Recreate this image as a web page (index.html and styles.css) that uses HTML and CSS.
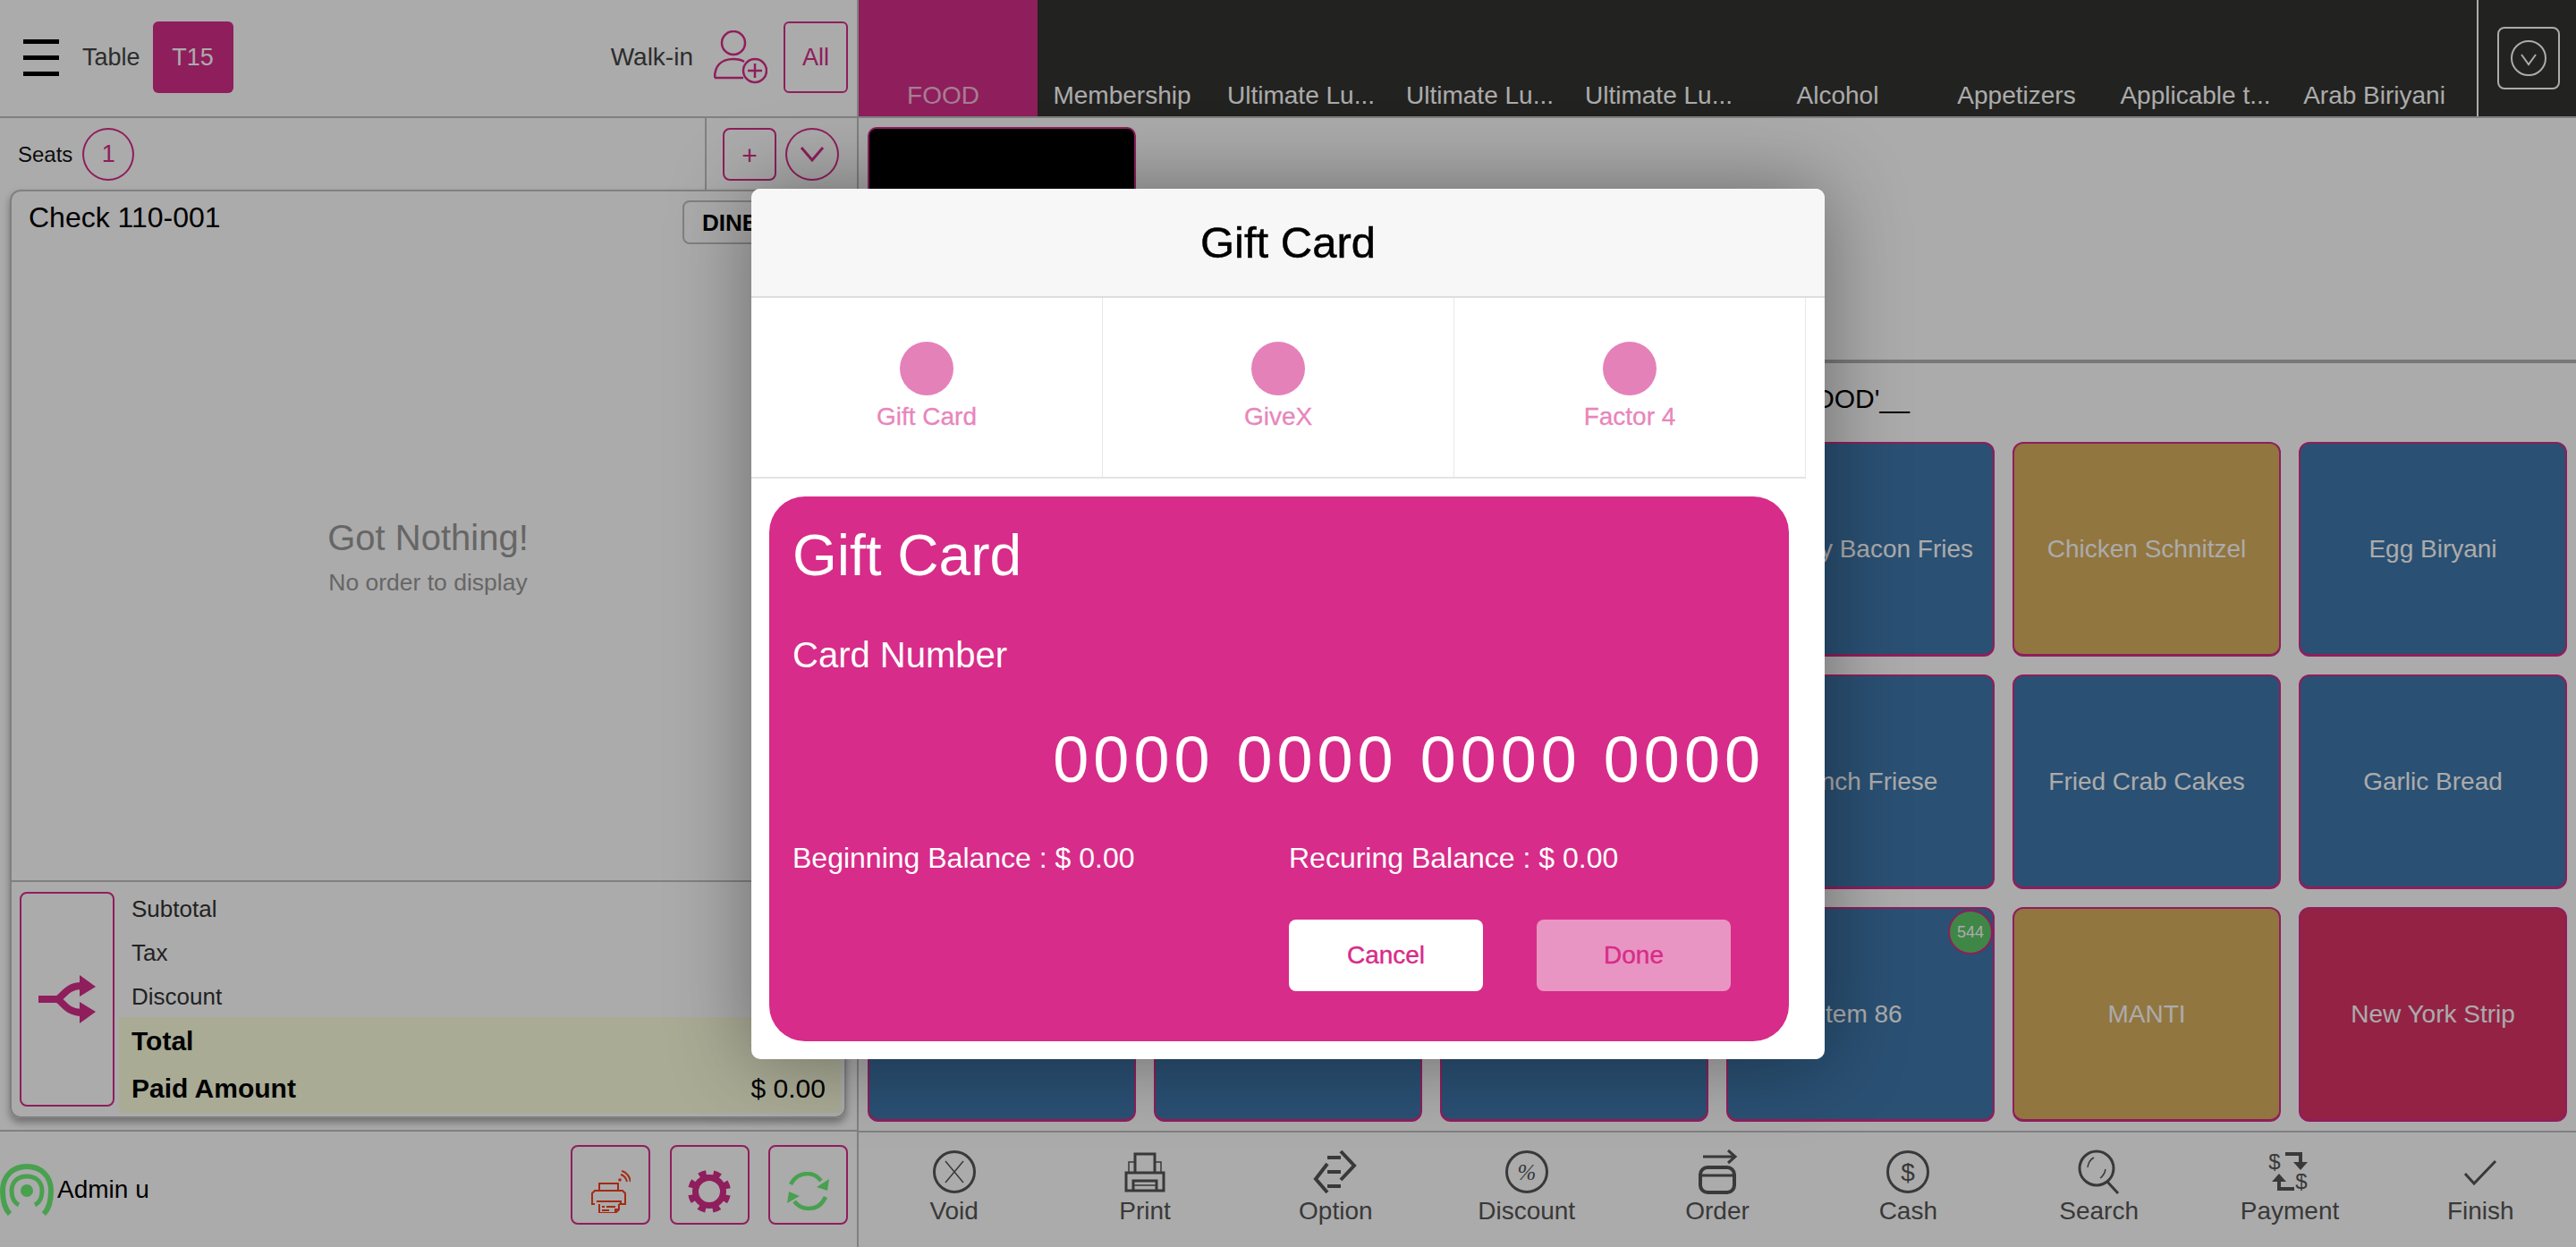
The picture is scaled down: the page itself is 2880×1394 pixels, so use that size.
FILE: index.html
```html
<!DOCTYPE html>
<html lang="en">
<head>
    <meta charset="UTF-8">
    <title>Gift Card</title>
    <link rel="stylesheet" href="styles.css">
</head>
<body>
<div class="app">
    <!-- left: the check -->
    <div class="left">
        <div class="top-bar">
            <div class="burger"><i></i><i></i><i></i></div>
            <span class="table-label">Table</span>
            <div class="table-no">T15</div>
            <span class="walkin">Walk-in</span>
            <svg class="person" viewBox="0 0 60 60">
                <circle cx="22" cy="14" r="13"/>
                <path d="M1 53C1 40 8 32 22 32C27 32 31 33 34 35M1 53H33"/>
                <circle cx="46" cy="45" r="13"/>
                <path d="M46 37V53M38 45H54"/>
            </svg>
            <div class="all-btn">All</div>
        </div>
        <div class="seat-row">
            <span class="seats-label">Seats</span>
            <div class="seat-no">1</div>
            <div class="seat-tools">
                <div class="plus-btn">+</div>
                <div class="down-btn">
                    <svg viewBox="0 0 30 18"><path d="M3 2L15 16L27 2"/></svg>
                </div>
            </div>
        </div>
        <div class="check">
            <div class="check-head">
                <span class="check-no">Check 110-001</span>
                <div class="dine">DINE IN</div>
            </div>
            <div class="check-body">
                <div class="empty-title">Got Nothing!</div>
                <div class="empty-sub">No order to display</div>
            </div>
            <div class="totals">
                <div class="split-btn">
                    <svg viewBox="0 0 64 54">
                        <path class="split-line" d="M0 27H20C26 27 30 12 48 12M20 27C26 27 30 42 48 42"/>
                        <path class="split-head" d="M46 0L64 13L46 24ZM46 54L64 41L46 30Z"/>
                    </svg>
                </div>
                <div class="rows">
                    <div class="row"><span>Subtotal</span><span>$ 0.00</span></div>
                    <div class="row"><span>Tax</span><span>$ 0.00</span></div>
                    <div class="row"><span>Discount</span><span>$ 0.00</span></div>
                    <div class="row big"><span>Total</span><span>$ 0.00</span></div>
                    <div class="row big"><span>Paid Amount</span><span>$ 0.00</span></div>
                </div>
            </div>
        </div>
        <div class="status-bar">
            <svg class="wifi" viewBox="0 0 60 58">
                <path d="M11 56C5 50 3 40 3 30C3 14 14 3 30 3C46 3 57 14 57 30C57 40 55 50 49 56"/>
                <path class="thin" d="M21 46C15 43 13 37 13 30C13 20 20 14 30 14C40 14 47 20 47 30C47 37 45 43 39 46"/>
                <circle class="dot" cx="30" cy="30" r="7"/>
            </svg>
            <span class="user">Admin u</span>
            <div class="status-tools">
                <div class="tool-btn">
                    <svg class="printer" viewBox="0 0 44 48">
                        <circle class="red-dot" cx="32" cy="11" r="1.8"/>
                        <path d="M33 5C37 6 39 9 40 13M34 1C39 2 43 7 44 13"/>
                        <path d="M9 23V15H30V23M4 38H1V26L4 23H35L38 26V38H31M6 35H33V38M9 38V48H27L31 44V38M27 48V44H31M12 41H15M17 41H27M12 45H20"/>
                    </svg>
                </div>
                <div class="tool-btn">
                    <svg class="gear" viewBox="0 0 48 48">
                        <circle class="teeth" cx="24" cy="24" r="21"/>
                        <circle class="ring" cx="24" cy="24" r="15.5"/>
                    </svg>
                </div>
                <div class="tool-btn">
                    <svg class="refresh" viewBox="0 0 48 44">
                        <path d="M4 14C8 6 15 2 23 2C29 2 34 5 38 10"/>
                        <path d="M43 28C39 37 32 41 24 41C18 41 12 38 8 33"/>
                        <path class="fill" d="M47 8L45 21L33 17ZM0 35L2 22L14 27Z"/>
                    </svg>
                </div>
            </div>
        </div>
    </div>

    <!-- right: the menu -->
    <div class="right">
        <div class="cat-bar">
            <div class="cat active">FOOD</div>
            <div class="cat">Membership</div>
            <div class="cat">Ultimate Lu...</div>
            <div class="cat">Ultimate Lu...</div>
            <div class="cat">Ultimate Lu...</div>
            <div class="cat">Alcohol</div>
            <div class="cat">Appetizers</div>
            <div class="cat">Applicable t...</div>
            <div class="cat">Arab Biriyani</div>
            <div class="cat-more">
                <div class="more-btn">
                    <svg viewBox="0 0 40 40">
                        <circle cx="20" cy="20" r="19"/>
                        <path d="M12 16L20 27L28 16"/>
                    </svg>
                </div>
            </div>
        </div>
        <div class="sub-cats"><div class="black-tile"></div></div>
        <div class="items-title">__'FOOD'__</div>
        <div class="grid">
            <div class="tile blue"></div>
            <div class="tile blue"></div>
            <div class="tile blue"></div>
            <div class="tile blue">Cheesy Bacon Fries</div>
            <div class="tile gold">Chicken Schnitzel</div>
            <div class="tile blue">Egg Biryani</div>
            <div class="tile blue"></div>
            <div class="tile blue"></div>
            <div class="tile blue"></div>
            <div class="tile blue">French Friese</div>
            <div class="tile blue">Fried Crab Cakes</div>
            <div class="tile blue">Garlic Bread</div>
            <div class="tile blue"></div>
            <div class="tile blue"></div>
            <div class="tile blue"></div>
            <div class="tile blue">Item 86<span class="badge">544</span></div>
            <div class="tile gold">MANTI</div>
            <div class="tile red">New York Strip</div>
        </div>
        <div class="actions">
            <div class="action">
                <svg viewBox="0 0 48 48"><circle cx="24" cy="24" r="22.5" class="s3"/><path d="M14 12L34 36M34 12L14 36"/></svg>
                <span>Void</span>
            </div>
            <div class="action">
                <svg viewBox="0 0 48 48"><path class="s3" d="M3 25H45V45H3ZM11 45V34H37V45M13 25V4H35V25"/><path d="M6 25V13H13M42 25V13H35M11 39H37"/></svg>
                <span>Print</span>
            </div>
            <div class="action">
                <svg viewBox="0 0 48 48"><path class="s4" d="M30 1L45 17L30 33M15 15L2 32L15 47M15 8H30M15 24H30M15 40H30"/></svg>
                <span>Option</span>
            </div>
            <div class="action">
                <svg viewBox="0 0 48 48"><circle cx="24" cy="24" r="22.5" class="s3"/><text class="glyph pct" x="24" y="33" text-anchor="middle">%</text></svg>
                <span>Discount</span>
            </div>
            <div class="action">
                <svg viewBox="0 0 48 48"><path class="s3" d="M8 7H43M36 0L44 7L36 14"/><rect class="s4" x="5" y="19" width="38" height="28" rx="8"/><path class="s3" d="M5 28H43"/></svg>
                <span>Order</span>
            </div>
            <div class="action">
                <svg viewBox="0 0 48 48"><circle cx="24" cy="24" r="22.5" class="s3"/><text class="glyph" x="24" y="34" text-anchor="middle">$</text></svg>
                <span>Cash</span>
            </div>
            <div class="action">
                <svg viewBox="0 0 48 48"><circle cx="21" cy="20" r="19" class="s3"/><path class="s3" d="M33 35L45 48"/><path d="M11 19C12 13 14 10 18 8M31 21C30 26 28 29 25 31"/></svg>
                <span>Search</span>
            </div>
            <div class="action">
                <svg viewBox="0 0 48 48">
                    <text class="glyph small" x="7" y="21" text-anchor="middle">$</text>
                    <text class="glyph small" x="37" y="43" text-anchor="middle">$</text>
                    <path class="s4" d="M19 4H36V17"/><path class="fill" d="M28 13H44L36 22Z"/>
                    <path class="s4" d="M29 43H12V30"/><path class="fill" d="M4 35H20L12 26Z"/>
                </svg>
                <span>Payment</span>
            </div>
            <div class="action">
                <svg viewBox="0 0 48 48"><path class="s3" d="M7 26L17 37L41 12"/></svg>
                <span>Finish</span>
            </div>
        </div>
    </div>
</div>

<div class="scrim"></div>

<div class="popup">
    <div class="popup-head">Gift Card</div>
    <div class="types">
        <div class="type"><i></i><span>Gift Card</span></div>
        <div class="type"><i></i><span>GiveX</span></div>
        <div class="type"><i></i><span>Factor 4</span></div>
    </div>
    <div class="card">
        <div class="card-title">Gift Card</div>
        <div class="card-label">Card Number</div>
        <div class="card-number">0000 0000 0000 0000</div>
        <div class="balances">
            <span>Beginning Balance : $ 0.00</span>
            <span>Recuring Balance : $ 0.00</span>
        </div>
        <div class="card-btns">
            <div class="card-btn">Cancel</div>
            <div class="card-btn off">Done</div>
        </div>
    </div>
</div>
</body>
</html>
```

FILE: styles.css
```css
*{
    margin:0;
    padding:0;
    box-sizing:border-box;
}
body{
    width:2880px;
    height:1394px;
    overflow:hidden;
    background:#fff;
    color:#000;
    font-family:"Liberation Sans",Arial,sans-serif;
}
svg{
    display:block;
    fill:none;
}
.app{
    display:flex;
    height:1394px;
}

/* left */
.left{
    width:960px;
    display:flex;
    flex-direction:column;
    border-right:2px solid #bfbfbf;
}
.top-bar{
    height:132px;
    display:flex;
    align-items:center;
    padding:0 10px 2px 26px;
    border-bottom:2px solid #bfbfbf;
}
.burger{
    width:40px;
    display:flex;
    flex-direction:column;
    gap:13px;
    margin-right:26px;
}
.burger i{
    display:block;
    height:5px;
    background:#000;
}
.table-label{
    font-size:27px;
    color:#444;
    margin-right:14px;
}
.table-no{
    width:90px;
    height:80px;
    border-radius:6px;
    background:#d62d89;
    color:#fff;
    font-size:27px;
    line-height:80px;
    text-align:center;
}
.walkin{
    margin-left:auto;
    font-size:28px;
    color:#444;
    margin-right:23px;
}
.person{
    width:60px;
    height:60px;
    margin-right:18px;
    stroke:#d62d89;
    stroke-width:2.5;
}
.all-btn{
    width:72px;
    height:80px;
    border:2px solid #d62d89;
    border-radius:6px;
    color:#d62d89;
    font-size:27px;
    line-height:76px;
    text-align:center;
}
.seat-row{
    height:80px;
    display:flex;
    align-items:center;
    padding-left:20px;
}
.seats-label{
    font-size:24px;
    line-height:32px;
    padding-top:2px;
    color:#111;
    margin-right:11px;
}
.seat-no{
    width:58px;
    height:59px;
    border:2px solid #d62d89;
    border-radius:50%;
    color:#d62d89;
    font-size:27px;
    line-height:54px;
    text-align:center;
}
.seat-tools{
    margin-left:auto;
    height:80px;
    width:170px;
    border-left:2px solid #bfbfbf;
    display:flex;
    align-items:center;
    gap:10px;
    padding-left:18px;
}
.plus-btn{
    width:60px;
    height:59px;
    border:2px solid #d62d89;
    border-radius:8px;
    color:#d62d89;
    font-size:30px;
    line-height:58px;
    text-align:center;
}
.down-btn{
    width:60px;
    height:59px;
    border:2px solid #d62d89;
    border-radius:50%;
    display:flex;
    align-items:center;
    justify-content:center;
}
.down-btn svg{
    width:30px;
    height:18px;
    stroke:#d62d89;
    stroke-width:3;
}
.check{
    height:1038px;
    margin:0 12px 13px 11px;
    border:2px solid #bfbfbf;
    border-radius:12px;
    box-shadow:0 5px 8px rgba(0,0,0,.35);
    display:flex;
    flex-direction:column;
}
.check-head{
    height:59px;
    padding-top:12px;
    display:flex;
    align-items:flex-start;
    padding-left:19px;
}
.check-no{
    font-size:32px;
    line-height:34px;
}
.dine{
    margin-left:auto;
    margin-right:14px;
    margin-top:-2px;
    width:167px;
    height:49px;
    border:2px solid #bfbfbf;
    border-radius:8px;
    padding-left:20px;
    font-size:26px;
    font-weight:bold;
    line-height:46px;
}
.check-body{
    flex:1;
    display:flex;
    flex-direction:column;
    align-items:center;
    justify-content:center;
    padding-bottom:10px;
    color:#999;
}
.empty-title{
    font-size:40px;
    line-height:48px;
    margin-bottom:6px;
}
.empty-sub{
    font-size:26.5px;
    line-height:40px;
}
.totals{
    height:264px;
    border-top:2px solid #bfbfbf;
    display:flex;
    align-items:flex-start;
}
.split-btn{
    width:106px;
    height:240px;
    margin:11px 5px 0 9px;
    border:2px solid #d62d89;
    border-radius:8px;
    display:flex;
    align-items:center;
    justify-content:center;
}
.split-btn svg{
    width:64px;
    height:54px;
}
.split-line{
    stroke:#d62d89;
    stroke-width:8;
}
.split-head{
    fill:#d62d89;
}
.rows{
    flex:1;
    margin:4px 4px 0 0;
}
.row{
    height:49px;
    display:flex;
    align-items:center;
    justify-content:space-between;
    padding:3px 17px 0 14px;
    font-size:26px;
    color:#333;
}
.row.big{
    height:53.5px;
    padding-top:0;
    background:#fdffdf;
    color:#000;
    font-size:30px;
    font-weight:bold;
}
.row.big span:last-child{
    font-weight:normal;
}
.status-bar{
    flex:1;
    border-top:2px solid #bfbfbf;
    display:flex;
    align-items:center;
    padding-right:10px;
}
.wifi{
    width:60px;
    height:58px;
    stroke:#6eef77;
    stroke-width:6;
}
.wifi .thin{
    stroke-width:5;
}
.wifi .dot{
    fill:#6eef77;
    stroke:none;
}
.user{
    margin-left:4px;
    font-size:28px;
}
.status-tools{
    margin-left:auto;
    margin-bottom:10px;
    display:flex;
    gap:21.5px;
}
.tool-btn{
    width:89px;
    height:89px;
    border:2px solid #d62d89;
    border-radius:8px;
    display:flex;
    align-items:center;
    justify-content:center;
}
.printer{
    width:44px;
    height:48px;
    margin-top:14px;
    stroke:#f5401f;
    stroke-width:2;
}
.printer .red-dot{
    fill:#f5401f;
    stroke:none;
}
.gear{
    width:48px;
    height:48px;
    margin-top:14px;
}
.gear .ring{
    stroke:#d62d89;
    stroke-width:7;
}
.gear .teeth{
    stroke:#d62d89;
    stroke-width:6;
    stroke-dasharray:8.2 8.29;
    stroke-dashoffset:-4.1;
}
.refresh{
    width:48px;
    height:44px;
    margin-top:14px;
    stroke:#6eef77;
    stroke-width:4.5;
}
.refresh .fill{
    fill:#6eef77;
    stroke:none;
}

/* right */
.right{
    width:1920px;
    display:flex;
    flex-direction:column;
}
.cat-bar{
    height:132px;
    display:flex;
    background:#333330;
    border-bottom:2px solid #bfbfbf;
}
.cat{
    width:200px;
    padding:88px 11px 0 0;
    text-align:center;
    color:#fff;
    font-size:28px;
    line-height:38px;
    white-space:nowrap;
}
.cat.active{
    background:#d62d89;
    color:#f7bddc;
}
.cat-more{
    margin-left:9px;
    flex:1;
    border-left:2px solid #fff;
    display:flex;
    align-items:center;
    padding-left:21px;
}
.more-btn{
    width:70px;
    height:70px;
    border:2px solid #fff;
    border-radius:8px;
    display:flex;
    align-items:center;
    justify-content:center;
}
.more-btn svg{
    width:40px;
    height:40px;
    stroke:#fff;
    stroke-width:2;
}
.sub-cats{
    height:274px;
    padding:10px;
    border-bottom:4px solid #b3b3b3;
}
.black-tile{
    width:300px;
    height:240px;
    background:#000;
    border:2px solid #d62d89;
    border-radius:10px;
}
.items-title{
    height:88px;
    padding-left:1010px;
    font-size:30px;
    line-height:80px;
}
.grid{
    display:grid;
    grid-template-columns:repeat(6,300px);
    grid-auto-rows:240px;
    gap:20px;
    padding-left:10px;
}
.tile{
    position:relative;
    border:2px solid #d62d89;
    border-bottom-width:3px;
    border-radius:12px;
    color:#fff;
    font-size:28px;
    display:flex;
    align-items:center;
    justify-content:center;
}
.blue{background:#3f78ac;}
.gold{background:#dab05e;}
.red{background:#dc3468;}
.badge{
    position:absolute;
    top:1px;
    right:0;
    width:50px;
    height:50px;
    border:2px solid #d62d89;
    border-radius:50%;
    background:#5ec96b;
    font-size:18px;
    line-height:46px;
    text-align:center;
}
.actions{
    margin-top:10px;
    flex:1;
    border-top:2px solid #bfbfbf;
    display:grid;
    grid-template-columns:repeat(9,1fr);
    padding-top:20px;
}
.action{
    display:flex;
    flex-direction:column;
    align-items:center;
    color:#555;
    font-size:28px;
    line-height:34px;
}
.action svg{
    width:48px;
    height:48px;
    margin-bottom:3px;
    stroke:#555;
    stroke-width:1.5;
    overflow:visible;
}
.action .s3{stroke-width:3;}
.action .s4{stroke-width:4;}
.action .fill{fill:#555;stroke:none;}
.glyph{
    fill:#555;
    stroke:none;
    font-size:28px;
}
.glyph.pct{
    font-family:"Liberation Serif",serif;
    font-style:italic;
    font-size:25px;
}
.glyph.small{
    font-size:24px;
}

/* popup */
.scrim{
    position:absolute;
    left:0;
    top:0;
    width:2880px;
    height:1394px;
    background:rgba(0,0,0,.33);
}
.popup{
    position:absolute;
    left:840px;
    top:211px;
    width:1200px;
    height:973px;
    background:#fff;
    border-radius:10px;
    box-shadow:0 0 90px rgba(0,0,0,.38);
}
.popup-head{
    height:122px;
    background:#f7f7f7;
    border-bottom:2px solid #ddd;
    border-radius:10px 10px 0 0;
    font-size:49px;
    line-height:120px;
    text-align:center;
    -webkit-text-stroke:.5px #000;
}
.types{
    width:1179px;
    height:202px;
    display:flex;
    border-bottom:2px solid #e4e4e4;
}
.type{
    flex:1;
    border-right:1px solid #e8e8e8;
    display:flex;
    flex-direction:column;
    align-items:center;
    padding-top:49px;
    color:#e886bb;
    font-size:28px;
    -webkit-text-stroke:.3px #e886bb;
}
.type i{
    width:60px;
    height:60px;
    border-radius:50%;
    background:#e581b9;
    margin-bottom:8px;
}
.card{
    width:1140px;
    height:609px;
    margin:20px 0 0 20px;
    padding:0 27px 0 26px;
    background:#d72c89;
    border-radius:40px;
    color:#fff;
}
.card-title{
    font-size:64px;
    line-height:76px;
    padding-top:28px;
    height:104px;
}
.card-label{
    font-size:40px;
    line-height:48px;
    margin-top:49px;
}
.card-number{
    margin-top:51px;
    font-size:72px;
    line-height:84px;
    letter-spacing:5px;
    text-align:right;
}
.balances{
    margin-top:48px;
    display:flex;
    font-size:32px;
    line-height:40px;
}
.balances span:first-child{
    width:555px;
}
.card-btns{
    margin-top:49px;
    margin-left:555px;
    display:flex;
    gap:60px;
}
.card-btn{
    width:217px;
    height:80px;
    background:#fff;
    border-radius:8px;
    color:#d72c89;
    font-size:28px;
    line-height:80px;
    text-align:center;
    -webkit-text-stroke:.4px #d72c89;
}
.card-btn.off{
    background:#e995c3;
}
```
